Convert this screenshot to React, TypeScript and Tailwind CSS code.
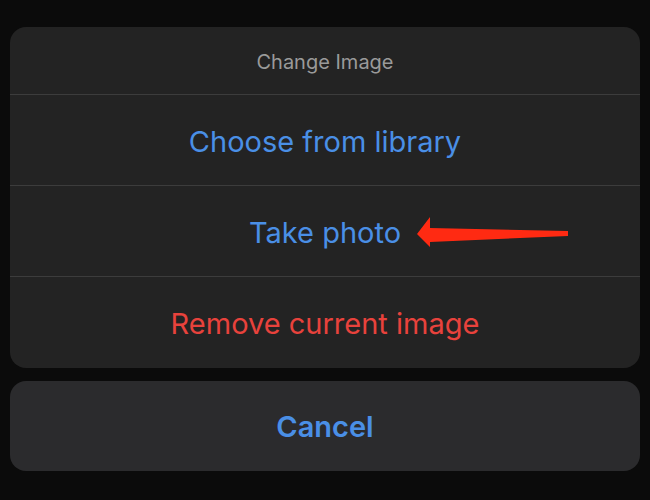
const actions = [
  { label: "Choose from library", color: "text-[#4a8fe6]", arrow: false },
  { label: "Take photo", color: "text-[#4a8fe6]", arrow: true },
  { label: "Remove current image", color: "text-[#e8423c]", arrow: false },
];

function Arrow() {
  return (
    <svg
      className="absolute left-[407px] top-[calc(50%+2px)] -translate-y-1/2"
      width="152"
      height="32"
      viewBox="0 0 152 32"
    >
      <path
        d="M0 17 L13 0 L13 11 L151 14 L151 19 L13 25 L13 30 Z"
        fill="#ff2a12"
      />
    </svg>
  );
}

export default function App() {
  return (
    <div
      className="flex h-[500px] w-[650px] flex-col gap-[13px] bg-[#0b0b0b] px-[10px] pt-[27px]"
      style={{ fontFamily: "Inter, 'Liberation Sans', sans-serif" }}
    >
      <div className="overflow-hidden rounded-[16px] bg-[#232323]">
        <div className="flex h-[68px] items-center justify-center border-b border-[#3c3c3c] pt-[2px] text-[20px] text-[#9a9a9a]">
          Change Image
        </div>
        {actions.map((action, i) => (
          <div
            key={action.label}
            className={
              "relative flex h-[91px] items-center justify-center pt-[3px] text-[29px] " +
              action.color +
              (i < actions.length - 1 ? " border-b border-[#3c3c3c]" : "")
            }
          >
            {action.label}
            {action.arrow ? <Arrow /> : null}
          </div>
        ))}
      </div>

      <div className="flex h-[90px] items-center justify-center rounded-[16px] bg-[#2b2b2d] pt-[2px] text-[29px] font-semibold text-[#4a8fe6]">
        Cancel
      </div>
    </div>
  );
}
